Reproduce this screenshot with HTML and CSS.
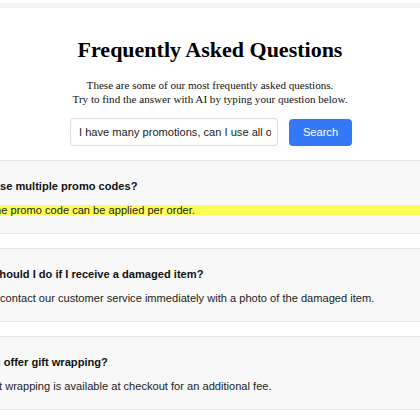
FILE: index.html
```html
<!DOCTYPE html>
<html lang="en">
<head>
<meta charset="utf-8">
<title>FAQ</title>
<link rel="stylesheet" href="styles.css">
</head>
<body>
<div class="topbar"></div>
<header class="hero">
  <h1 class="title">Frequently Asked Questions</h1>
  <p class="subtitle">These are some of our most frequently asked questions.<br>Try to find the answer with AI by typing your question below.</p>
  <form class="search">
    <input class="search-input" type="text" value="I have many promotions, can I use all of them?">
    <button class="search-btn" type="button">Search</button>
  </form>
</header>
<section class="faq">
  <div class="card">
    <h3 class="q">Can I use multiple promo codes?</h3>
    <p class="a hl">Only one promo code can be applied per order.</p>
  </div>
  <div class="card">
    <h3 class="q">What should I do if I receive a damaged item?</h3>
    <p class="a">Please contact our customer service immediately with a photo of the damaged item.</p>
  </div>
  <div class="card">
    <h3 class="q">Do you offer gift wrapping?</h3>
    <p class="a">Yes, gift wrapping is available at checkout for an additional fee.</p>
  </div>
</section>
</body>
</html>
```
FILE: styles.css
```css
html, body {
  margin: 0;
  padding: 0;
  background: #fff;
  overflow: hidden;
}
body {
  font-family: "Liberation Sans", Arial, sans-serif;
  color: #111;
}
.topbar {
  height: 5px;
  margin-top: 3px;
  background: #f4f4f4;
}
.hero {
  text-align: center;
  padding-top: 29px;
}
.title {
  font-family: "Liberation Serif", "Times New Roman", serif;
  font-weight: bold;
  font-size: 22px;
  line-height: 25px;
  margin: 0;
  color: #000;
}
.subtitle {
  font-family: "Liberation Serif", "Times New Roman", serif;
  font-size: 11.1px;
  line-height: 14px;
  margin: 16px 0 0;
  color: #111;
}
.search {
  display: flex;
  justify-content: center;
  align-items: center;
  margin: 12px 0 0;
  padding-left: 2px;
}
.search-input {
  box-sizing: border-box;
  width: 208px;
  height: 28px;
  border: 1px solid #dcdcdc;
  border-radius: 4px;
  padding: 0 6px 0 8px;
  font-family: "Liberation Sans", Arial, sans-serif;
  font-size: 11.1px;
  color: #222;
  background: #fff;
  outline: none;
}
.search-btn {
  box-sizing: border-box;
  width: 63px;
  height: 27px;
  margin-left: 11px;
  border: none;
  border-radius: 4px;
  background: #3478f6;
  color: #fff;
  font-family: "Liberation Sans", Arial, sans-serif;
  font-size: 11.1px;
}
.faq {
  margin: 14px -54px 0;
  display: flex;
  flex-direction: column;
  gap: 14px;
}
.card {
  background: #f8f8f8;
  border: 1px solid #e6e6e6;
  border-radius: 4px;
  padding: 18px 16px;
}
.q {
  margin: 0;
  font-size: 11.1px;
  line-height: 14px;
  font-weight: bold;
  color: #111;
}
.a {
  margin: 12px 0 0;
  font-size: 11.1px;
  line-height: 10px;
  color: #222;
}
.hl {
  background: #fdfd55;
}
```
